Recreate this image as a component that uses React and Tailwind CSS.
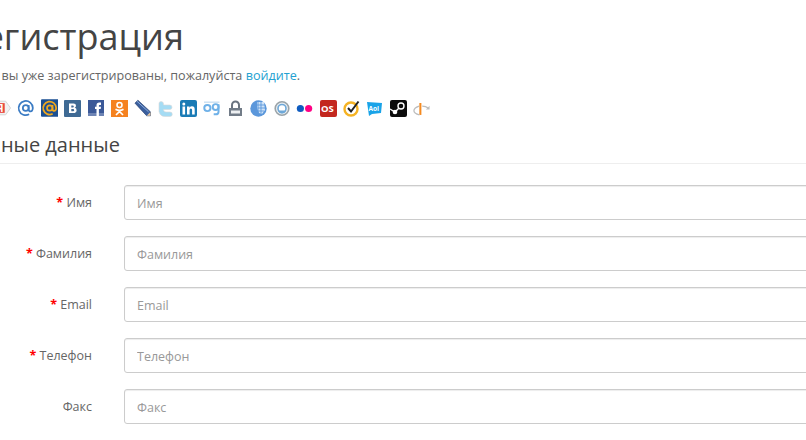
import React from "react";

const Yandex = () => (
  <svg width="18" height="18" viewBox="0 0 18 18">
    <path d="M1 2h11l5 7-5 7H1z" fill="#f1f1f1" stroke="#d5d5d5" />
    <rect x="2" y="4" width="9" height="10" fill="#e8453c" />
    <text x="3" y="13" fontSize="10" fontWeight="700" fill="#fff" fontFamily="Open Sans">Я</text>
  </svg>
);
const At = () => (
  <svg width="18" height="18" viewBox="0 0 18 18" fill="none" stroke="#3c7cc4" strokeWidth="1.800">
    <circle cx="9" cy="9" r="3" />
    <path d="M12 6v4.500q0 2 2 2t2.300-3.500A7.300 7.300 0 1 0 12.500 15.500" />
  </svg>
);
const Mail = () => (
  <svg width="18" height="18" viewBox="0 0 18 18" fill="none">
    <rect width="18" height="18" rx="1" fill="#1b4f92" />
    <circle cx="9" cy="9" r="2.800" stroke="#f0a81e" strokeWidth="1.800" />
    <path d="M11.800 6v4q0 2 1.800 2t2-3A6.700 6.700 0 1 0 12 15" stroke="#f0a81e" strokeWidth="1.800" />
  </svg>
);
const Vk = () => (
  <svg width="17" height="17" viewBox="0 0 17 17">
    <rect width="17" height="17" rx="1" fill="#3f6a94" />
    <path d="M5 3.500h4.500q2.500 0 2.500 2.200 0 1.500-1.300 2.100 1.900.5 1.900 2.400 0 2.800-3.200 2.800H5zm2.300 1.900v2h1.500q1 0 1-1t-1-1zm0 3.700v2.100h1.800q1.100 0 1.100-1.050T9.100 9.100z" fill="#fff" />
  </svg>
);
const Fb = () => (
  <svg width="16" height="16" viewBox="0 0 16 16">
    <rect width="16" height="16" fill="#3b5998" />
    <rect y="13" width="16" height="3" fill="#6d84b4" />
    <path d="M8.500 16V9H7V6.800h1.500V5.300C8.500 3.500 9.500 2.600 11.200 2.600H13v2.300h-1.200c-.7 0-.9.300-.9.900v1H13L12.700 9h-1.800v7z" fill="#fff" />
  </svg>
);
const Ok = () => (
  <svg width="17" height="17" viewBox="0 0 17 17">
    <rect width="17" height="17" fill="#f58220" />
    <circle cx="8.500" cy="5" r="2.500" fill="none" stroke="#fff" strokeWidth="1.600" />
    <path d="M4.500 9.300q4 2.300 8 0M8.500 10.500v1.500M5 15l3.500-3.500L12 15" fill="none" stroke="#fff" strokeWidth="1.700" />
  </svg>
);
const Pencil = () => (
  <svg width="18" height="18" viewBox="0 0 18 18">
    <path d="M1 4l3-3 13 12 0 4-4 0z" fill="#3a5f9e" stroke="#27406e" strokeWidth=".7" />
    <path d="M13 17l4 0 0-4z" fill="#e8c9a0" />
    <path d="M3 2l12 11" stroke="#8fb0e0" strokeWidth="1" />
  </svg>
);
const Twitter = () => (
  <svg width="16" height="17" viewBox="0 0 16 17">
    <path d="M3 1.500q2.500 0 2.500 2.500v1h6q2.500 0 2.500 2.300t-2.500 2.200h-6q0 2.500 2.500 2.500h4q2.300 0 2.300 2.200T12 16.500H7Q2 16.500 1 11.500V3.500q0-2 2-2z" fill="#a5dcf4" stroke="#d9d9d9" strokeWidth=".6" />
  </svg>
);
const Linkedin = () => (
  <svg width="17" height="17" viewBox="0 0 17 17">
    <rect width="17" height="17" rx="2" fill="#1a7bb5" />
    <rect x="2.500" y="6.500" width="2.600" height="8" fill="#fff" />
    <circle cx="3.800" cy="4" r="1.500" fill="#fff" />
    <path d="M7 6.500h2.500v1.200q.9-1.400 2.500-1.400 2.700 0 2.700 3.200v5h-2.600V10q0-1.500-1.200-1.500T9.600 10v4.500H7z" fill="#fff" />
  </svg>
);
const Og = () => (
  <svg width="18" height="17" viewBox="0 0 18 17" fill="none" stroke="#6fb1e8" strokeWidth="2">
    <circle cx="4.500" cy="8" r="3.200" />
    <circle cx="13" cy="7" r="3" />
    <path d="M16 4v7.500q0 3-3 3h-2" />
    <path d="M1 2h16" stroke="#c8dff2" strokeWidth="1.400" />
  </svg>
);
const Lock = () => (
  <svg width="15" height="17" viewBox="0 0 15 17">
    <path d="M4 8V5a3.500 3.500 0 0 1 7 0v3" fill="none" stroke="#6b7480" strokeWidth="2" />
    <rect x="1" y="8" width="13" height="8" fill="#727c88" />
    <rect x="3" y="10.500" width="9" height="3" fill="#eef0f2" />
  </svg>
);
const Globe = () => (
  <svg width="17" height="17" viewBox="0 0 17 17">
    <circle cx="8.500" cy="8.500" r="8.200" fill="#5b97db" />
    <path d="M7 2h7l1 8-3 4-3-1-2-5z" fill="#cfe3f7" />
    <path d="M8 2v11M11 2v12M7 5h8M7.500 8h8M8 11h6" stroke="#5b97db" strokeWidth=".9" />
  </svg>
);
const Ring = () => (
  <svg width="16" height="17" viewBox="0 0 16 17">
    <circle cx="8" cy="8.500" r="6.800" fill="#e9eef1" stroke="#9aa3a8" strokeWidth="1.600" />
    <circle cx="8" cy="8.500" r="4" fill="#fff" stroke="#6ea8d8" strokeWidth="1.600" />
    <path d="M4 10.500h8q-1 3-4 3t-4-3z" fill="#6ea8d8" />
  </svg>
);
const Flickr = () => (
  <svg width="18" height="17" viewBox="0 0 18 17">
    <circle cx="4.500" cy="8.500" r="3.700" fill="#0f5cc0" />
    <circle cx="13" cy="8.500" r="3.700" fill="#ff0084" />
  </svg>
);
const Os = () => (
  <svg width="17" height="17" viewBox="0 0 17 17">
    <rect width="17" height="17" rx="2" fill="#c3281f" />
    <text x="1" y="12" fontSize="9.500" fontWeight="700" fill="#fff" fontFamily="Open Sans">OS</text>
  </svg>
);
const Check = () => (
  <svg width="17" height="17" viewBox="0 0 17 17" fill="none">
    <circle cx="8" cy="9" r="6.500" stroke="#f5b324" strokeWidth="2.400" />
    <path d="M5 8l3 3.500L15.500 1.500" stroke="#222" strokeWidth="2" />
  </svg>
);
const Aol = () => (
  <svg width="17" height="17" viewBox="0 0 17 17">
    <path d="M1 2l15 1-1 10-9 1-3 2z" fill="#19a3e8" />
    <text x="2.500" y="10.500" fontSize="6.500" fontWeight="700" fill="#fff" fontFamily="Open Sans">Aol</text>
  </svg>
);
const Steam = () => (
  <svg width="17" height="17" viewBox="0 0 17 17">
    <rect width="17" height="17" rx="2" fill="#0c0c0c" />
    <circle cx="11" cy="6" r="3" fill="none" stroke="#fff" strokeWidth="1.400" />
    <circle cx="5" cy="12" r="2.300" fill="#fff" />
    <path d="M0 9l5 3 4-4" stroke="#fff" strokeWidth="1.400" fill="none" />
  </svg>
);
const OpenId = () => (
  <svg width="19" height="17" viewBox="0 0 19 17" fill="none">
    <path d="M8 2.500v13" stroke="#f58a1f" strokeWidth="2.200" />
    <path d="M6.500 6Q1 8 1 11t6 4.500" stroke="#bdbdbd" strokeWidth="1.400" />
    <path d="M10 6q4 0 6.500 2" stroke="#bdbdbd" strokeWidth="1.400" />
    <path d="M18 5.500v4h-4z" fill="#bdbdbd" />
  </svg>
);

const icons = [Yandex, At, Mail, Vk, Fb, Ok, Pencil, Twitter, Linkedin, Og, Lock, Globe, Ring, Flickr, Os, Check, Aol, Steam, OpenId];

const fields = [
  { name: "Имя", required: true },
  { name: "Фамилия", required: true },
  { name: "Email", required: true },
  { name: "Телефон", required: true },
  { name: "Факс", required: false },
];

export default function App() {
  return (
    <div className="w-[806px] h-[440px] overflow-hidden bg-white text-[#555] font-['Open_Sans',sans-serif]">
      <div className="w-[870px] ml-[-38px] pt-[13px]">
        <h1 className="text-[36px] leading-[48px] text-[#444]">Регистрация</h1>
        <p className="mt-[5px] ml-[8px] text-[12.600px] leading-[20px] text-[#666]">
          Если вы уже зарегистрированы, пожалуйста <a className="text-[#23a1d1]">войдите</a>.
        </p>
        <div className="mt-[12px] flex items-center h-[20px] ml-[32px] gap-[5.750px]">
          {icons.map((Icon, i) => (
            <span key={i} className="flex justify-center shrink-0 w-[17.500px]">
              <Icon />
            </span>
          ))}
        </div>
        <h2 className="mt-[13px] pb-[4px] text-[20px] leading-[28px] text-[#444] border-b border-[#eee]">
          Личные данные
        </h2>
        <form className="mt-[21px] flex flex-col gap-[16px]">
          {fields.map((f) => (
            <div key={f.name} className="flex items-center gap-[32px]">
              <label className="w-[130px] shrink-0 pt-[2px] text-right text-[12.500px] text-[#666]">
                {f.required && <span className="text-[#f00] font-bold">* </span>}
                {f.name}
              </label>
              <input
                placeholder={f.name}
                className="w-[720px] h-[35px] px-[12px] pt-[1px] text-[12.500px] bg-white border border-[#ccc] rounded-[3px] placeholder:text-[#999] shadow-[inset_0_1px_1px_rgba(0,0,0,0.075)]"
              />
            </div>
          ))}
        </form>
      </div>
    </div>
  );
}
